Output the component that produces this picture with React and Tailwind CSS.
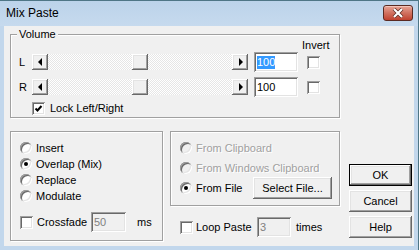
import React from 'react';

// classic 3D borders
const raised =
  'shadow-[inset_-1px_-1px_#696969,inset_1px_1px_#ffffff,inset_-2px_-2px_#a0a0a0,inset_2px_2px_#e3e3e3]';
const sunken =
  'shadow-[inset_1px_1px_#a0a0a0,inset_-1px_-1px_#ffffff,inset_2px_2px_#696969,inset_-2px_-2px_#e3e3e3]';
const group = 'relative border border-[#a0a0a0] shadow-[inset_1px_1px_#ffffff,1px_1px_#ffffff]';
const dim = 'text-[#a0a0a0] [text-shadow:1px_1px_#ffffff]';

function Check({ checked }) {
  return (
    <div className={`w-[13px] h-[13px] shrink-0 bg-white flex items-center justify-center ${sunken}`}>
      {checked && (
        <svg width="9" height="9" viewBox="0 0 9 9">
          <path d="M1.5 4.5 L3.5 6.5 L7.5 2" fill="none" stroke="#000" strokeWidth="2" />
        </svg>
      )}
    </div>
  );
}

function Radio({ checked, disabled }) {
  return (
    <div
      className={`w-[12px] h-[12px] shrink-0 rounded-full flex items-center justify-center ${sunken} ${
        disabled ? 'bg-[#f0f0f0]' : 'bg-white'
      }`}
    >
      {checked && <div className="w-[4px] h-[4px] rounded-full bg-black" />}
    </div>
  );
}

function Arrow({ dir }) {
  return (
    <div className={`w-[16px] h-[16px] shrink-0 bg-[#f0f0f0] flex items-center justify-center ${raised}`}>
      {dir === 'left' ? (
        <div className="w-0 h-0 border-y-[4px] border-y-transparent border-r-[4px] border-r-black" />
      ) : (
        <div className="w-0 h-0 border-y-[4px] border-y-transparent border-l-[4px] border-l-black ml-[1px]" />
      )}
    </div>
  );
}

function Slider() {
  return (
    <div className="flex w-[216px] h-[16px]">
      <Arrow dir="left" />
      <div className="flex-1 bg-[repeating-conic-gradient(#ffffff_0%_25%,#e6e6e6_0%_50%)] bg-[length:2px_2px]">
        <div className={`w-[16px] h-[16px] ml-[84px] bg-[#f0f0f0] ${raised}`} />
      </div>
      <Arrow dir="right" />
    </div>
  );
}

function Edit({ children, className = '', disabled }) {
  return (
    <div
      className={`h-[20px] shrink-0 flex items-center pl-[3px] ${sunken} ${
        disabled ? 'bg-[#f0f0f0] text-[#808080]' : 'bg-white'
      } ${className}`}
    >
      {children}
    </div>
  );
}

function VolumeRow({ label, selected }) {
  return (
    <div className="flex items-center h-[20px]">
      <span className="w-[13px]">{label}</span>
      <Slider />
      <Edit className="w-[44px] ml-[6px]">
        {selected ? (
          <span className="bg-[#3399ff] text-white leading-[13px]">100</span>
        ) : (
          <span>100</span>
        )}
      </Edit>
      <div className="ml-[9px]">
        <Check />
      </div>
    </div>
  );
}

function Button({ children, primary, className = '' }) {
  return (
    <div
      className={`h-[22px] flex items-center justify-center bg-[#f0f0f0] ${raised} ${
        primary ? 'border border-black' : ''
      } ${className}`}
    >
      {children}
    </div>
  );
}

export default function App() {
  const modes = [
    { label: 'Insert' },
    { label: 'Overlap (Mix)', checked: true },
    { label: 'Replace' },
    { label: 'Modulate' },
  ];

  return (
    <div className="w-[419px] h-[250px] flex flex-col bg-[#c2d7ec] border-t border-r border-[#4f7686] font-['Liberation_Sans',Arial,sans-serif] text-[11px] leading-[13px] text-black overflow-hidden">
      {/* Title bar */}
      <div className="h-[25px] flex items-start bg-gradient-to-b from-[#bcd3ea] to-[#c6daee]">
        <span className="ml-[6px] mt-[5px] text-[12px] leading-[15px]">Mix Paste</span>
        <div className="ml-auto mr-[5px] mt-[4px] w-[30px] h-[16px] rounded-[3px] border border-[#5a2a22] bg-gradient-to-b from-[#e8a597] via-[#d0705f] to-[#c0402e] flex items-center justify-center shadow-[inset_0_1px_0_#f3c4b9]">
          <svg width="12" height="10" viewBox="0 0 12 10">
            <path d="M2 1 L10 9 M10 1 L2 9" stroke="#5a2a22" strokeWidth="3.6" />
            <path d="M2 1 L10 9 M10 1 L2 9" stroke="#ffffff" strokeWidth="2.2" />
          </svg>
        </div>
      </div>

      {/* Client area */}
      <div className="flex-1 mx-[4px] mb-[4px] bg-[#f0f0f0] flex">
        <div className="ml-[6px] mt-[8px] w-[330px]">
          {/* Volume */}
          <div className={`${group} h-[84px] pl-[8px] pt-[4px]`}>
            <span className="absolute -top-[7px] left-[6px] px-[2px] bg-[#f0f0f0]">Volume</span>
            <div className="h-[13px] ml-[283px]">Invert</div>
            <VolumeRow label="L" selected />
            <div className="mt-[5px]">
              <VolumeRow label="R" />
            </div>
            <div className="mt-[5px] h-[13px] flex items-center pl-[13px]">
              <Check checked />
              <span className="ml-[5px]">Lock Left/Right</span>
            </div>
          </div>

          <div className="mt-[13px] flex gap-[7px]">
            {/* Paste mode */}
            <div className={`${group} w-[153px] h-[110px] pt-[8px] pl-[9px]`}>
              {modes.map((m) => (
                <div key={m.label} className="h-[16px] flex items-center">
                  <Radio checked={m.checked} />
                  <span className="ml-[4px]">{m.label}</span>
                </div>
              ))}
              <div className="mt-[8px] h-[20px] flex items-center">
                <Check />
                <span className="ml-[4px] w-[54px]">Crossfade</span>
                <Edit disabled className="w-[35px]">
                  50
                </Edit>
                <span className="ml-[11px]">ms</span>
              </div>
            </div>

            <div className="w-[170px]">
              {/* Source */}
              <div className={`${group} h-[75px] pt-[6px] pl-[9px] pr-[7px]`}>
                <div className="h-[20px] flex items-center">
                  <Radio disabled />
                  <span className={`ml-[4px] ${dim}`}>From Clipboard</span>
                </div>
                <div className="h-[20px] flex items-center">
                  <Radio disabled />
                  <span className={`ml-[4px] ${dim}`}>From Windows Clipboard</span>
                </div>
                <div className="h-[20px] flex items-center">
                  <Radio checked />
                  <span className="ml-[4px]">From File</span>
                  <Button className="ml-auto w-[79px] h-[20px]">Select File...</Button>
                </div>
              </div>

              <div className="mt-[11px] h-[20px] flex items-center pl-[10px]">
                <Check />
                <span className="ml-[3px] w-[61px]">Loop Paste</span>
                <Edit disabled className="w-[34px]">
                  3
                </Edit>
                <span className="ml-[5px]">times</span>
              </div>
            </div>
          </div>
        </div>

        {/* Dialog buttons */}
        <div className="ml-[9px] w-[63px] flex flex-col justify-end gap-[4px] pb-[8px]">
          <Button primary>OK</Button>
          <Button>Cancel</Button>
          <Button>Help</Button>
        </div>
      </div>
    </div>
  );
}
